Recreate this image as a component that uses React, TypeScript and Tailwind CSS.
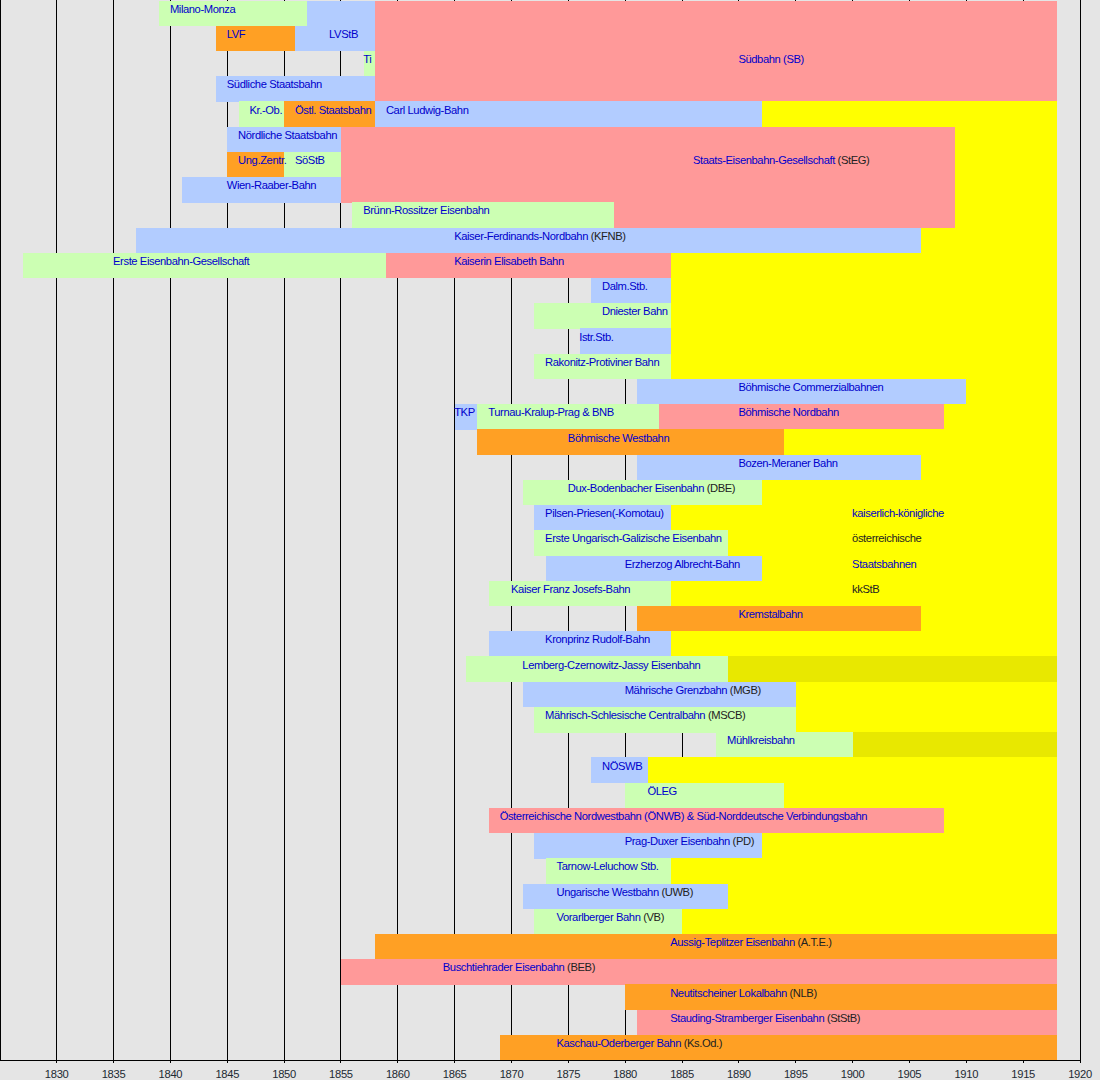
import React from "react";

type Bar = [number, number, number, string];
type Part = { t: string; link?: boolean };
type Label = { row: number; at: number; parts: Part[] };

const G = "bg-[#ccffb3]";
const B = "bg-[#b2ccff]";
const P = "bg-[#ff9999]";
const O = "bg-[#ffa024]";
const Y = "bg-[#ffff00]";
const D = "bg-[#e8e800]";

const ROW_H = 25.23;
const TOP = 0.5;
const END = 1918;

const x = (year: number) => 56.7 + (year - 1830) * 11.37;

const bars: Bar[] = [
  [0, 1839, 1852, G], [0, 1852, 1858, B], [0, 1858, END, P],
  [1, 1844, 1851, O], [1, 1851, 1858, B], [1, 1858, END, P],
  [2, 1857, 1858, G], [2, 1858, END, P],
  [3, 1844, 1858, B], [3, 1858, END, P],
  [4, 1846, 1850, G], [4, 1850, 1858, O], [4, 1858, 1892, B], [4, 1892, END, Y],
  [5, 1845, 1855, B], [5, 1855, 1909, P], [5, 1909, END, Y],
  [6, 1845, 1850, O], [6, 1850, 1855, G], [6, 1855, 1909, P], [6, 1909, END, Y],
  [7, 1841, 1855, B], [7, 1855, 1909, P], [7, 1909, END, Y],
  [8, 1856, 1879, G], [8, 1879, 1909, P], [8, 1909, END, Y],
  [9, 1837, 1906, B], [9, 1906, END, Y],
  [10, 1827, 1859, G], [10, 1859, 1884, P], [10, 1884, END, Y],
  [11, 1877, 1884, B], [11, 1884, END, Y],
  [12, 1872, 1884, G], [12, 1884, END, Y],
  [13, 1876, 1884, B], [13, 1884, END, Y],
  [14, 1872, 1884, G], [14, 1884, END, Y],
  [15, 1881, 1910, B], [15, 1910, END, Y],
  [16, 1865, 1867, B], [16, 1867, 1883, G], [16, 1883, 1908, P], [16, 1908, END, Y],
  [17, 1867, 1894, O], [17, 1894, END, Y],
  [18, 1881, 1906, B], [18, 1906, END, Y],
  [19, 1871, 1892, G], [19, 1892, END, Y],
  [20, 1872, 1884, B], [20, 1884, END, Y],
  [21, 1872, 1889, G], [21, 1889, END, Y],
  [22, 1873, 1892, B], [22, 1892, END, Y],
  [23, 1868, 1884, G], [23, 1884, END, Y],
  [24, 1881, 1906, O], [24, 1906, END, Y],
  [25, 1868, 1884, B], [25, 1884, END, Y],
  [26, 1866, 1889, G], [26, 1889, END, D],
  [27, 1871, 1895, B], [27, 1895, END, Y],
  [28, 1872, 1895, G], [28, 1895, END, Y],
  [29, 1888, 1900, G], [29, 1900, END, D],
  [30, 1877, 1882, B], [30, 1882, END, Y],
  [31, 1880, 1894, G], [31, 1894, END, Y],
  [32, 1868, 1908, P], [32, 1908, END, Y],
  [33, 1872, 1892, B], [33, 1892, END, Y],
  [34, 1873, 1884, G], [34, 1884, END, Y],
  [35, 1871, 1889, B], [35, 1889, END, Y],
  [36, 1872, 1885, G], [36, 1885, END, Y],
  [37, 1858, END, O],
  [38, 1855, END, P],
  [39, 1880, END, O],
  [40, 1881, END, P],
  [41, 1869, END, O],
];

const L = (row: number, at: number, name: string, abbr?: string, plain?: boolean): Label => ({
  row,
  at,
  parts: plain
    ? [{ t: name }]
    : abbr
    ? [{ t: name, link: true }, { t: " " + abbr }]
    : [{ t: name, link: true }],
});

const labels: Label[] = [
  L(0, 1840, "Milano-Monza"),
  L(1, 1845, "LVF"),
  L(1, 1854, "LVStB"),
  L(2, 1857, "Ti"),
  { row: 2, at: 1890, parts: [{ t: "Südbahn (SB)", link: true }] },
  L(3, 1845, "Südliche Staatsbahn"),
  L(4, 1847, "Kr.-Ob."),
  L(4, 1851, "Östl. Staatsbahn"),
  L(4, 1859, "Carl Ludwig-Bahn"),
  L(5, 1846, "Nördliche Staatsbahn"),
  L(6, 1846, "Ung.Zentr."),
  L(6, 1851, "SöStB"),
  L(6, 1886, "Staats-Eisenbahn-Gesellschaft", "(StEG)"),
  L(7, 1845, "Wien-Raaber-Bahn"),
  L(8, 1857, "Brünn-Rossitzer Eisenbahn"),
  L(9, 1865, "Kaiser-Ferdinands-Nordbahn", "(KFNB)"),
  L(10, 1835, "Erste Eisenbahn-Gesellschaft"),
  L(10, 1865, "Kaiserin Elisabeth Bahn"),
  L(11, 1878, "Dalm.Stb."),
  L(12, 1878, "Dniester Bahn"),
  L(13, 1876, "Istr.Stb."),
  L(14, 1873, "Rakonitz-Protiviner Bahn"),
  L(15, 1890, "Böhmische Commerzialbahnen"),
  L(16, 1865, "TKP"),
  L(16, 1868, "Turnau-Kralup-Prag & BNB"),
  L(16, 1890, "Böhmische Nordbahn"),
  L(17, 1875, "Böhmische Westbahn"),
  L(18, 1890, "Bozen-Meraner Bahn"),
  L(19, 1875, "Dux-Bodenbacher Eisenbahn", "(DBE)"),
  L(20, 1873, "Pilsen-Priesen(-Komotau)"),
  L(20, 1900, "kaiserlich-königliche"),
  L(21, 1873, "Erste Ungarisch-Galizische Eisenbahn"),
  L(21, 1900, "österreichische", undefined, true),
  L(22, 1880, "Erzherzog Albrecht-Bahn"),
  L(22, 1900, "Staatsbahnen"),
  L(23, 1870, "Kaiser Franz Josefs-Bahn"),
  L(23, 1900, "kkStB", undefined, true),
  L(24, 1890, "Kremstalbahn"),
  L(25, 1873, "Kronprinz Rudolf-Bahn"),
  L(26, 1871, "Lemberg-Czernowitz-Jassy Eisenbahn"),
  L(27, 1880, "Mährische Grenzbahn", "(MGB)"),
  L(28, 1873, "Mährisch-Schlesische Centralbahn", "(MSCB)"),
  L(29, 1889, "Mühlkreisbahn"),
  L(30, 1878, "NÖSWB"),
  L(31, 1882, "ÖLEG"),
  L(32, 1869, "Österreichische Nordwestbahn (ÖNWB) & Süd-Norddeutsche Verbindungsbahn"),
  L(33, 1880, "Prag-Duxer Eisenbahn", "(PD)"),
  L(34, 1874, "Tarnow-Leluchow Stb."),
  L(35, 1874, "Ungarische Westbahn", "(UWB)"),
  L(36, 1874, "Vorarlberger Bahn", "(VB)"),
  L(37, 1884, "Aussig-Teplitzer Eisenbahn", "(A.T.E.)"),
  L(38, 1864, "Buschtiehrader Eisenbahn", "(BEB)"),
  L(39, 1884, "Neutitscheiner Lokalbahn", "(NLB)"),
  L(40, 1884, "Stauding-Stramberger Eisenbahn", "(StStB)"),
  L(41, 1874, "Kaschau-Oderberger Bahn", "(Ks.Od.)"),
];

const years: number[] = [];
for (let y = 1830; y <= 1920; y += 5) years.push(y);

const AXIS_Y = 1060;

export default function App() {
  return (
    <div className="relative w-[1100px] h-[1080px] overflow-hidden bg-[#e5e5e5] font-['Liberation_Sans',Arial,sans-serif]">
      {/* left frame */}
      <div className="absolute left-0 top-0 w-px h-[1060px] bg-black" />

      {/* grid lines */}
      {years.map((y) => (
        <div
          key={y}
          className="absolute top-0 w-px bg-black"
          style={{ left: Math.floor(x(y)), height: AXIS_Y + 3 }}
        />
      ))}

      {/* bars */}
      {bars.map(([row, from, to, color], i) => {
        const top = TOP + row * ROW_H;
        return (
          <div
            key={i}
            className={`absolute ${color}`}
            style={{ left: x(from), width: x(to) - x(from), top, height: ROW_H + 0.4 }}
          />
        );
      })}

      {/* axis */}
      <div className="absolute left-0 top-[1060px] w-[1081px] h-px bg-black" />

      {/* labels */}
      {labels.map((l, i) => {
        const center = TOP + l.row * ROW_H + ROW_H / 2 - 4;
        return (
          <div
            key={i}
            className="absolute whitespace-nowrap text-[11.2px] leading-[13px] tracking-[-0.4px]"
            style={{ left: x(l.at) - 0.5, top: center - 6.5 }}
          >
            {l.parts.map((p, j) => (
              <span key={j} className={p.link ? "text-[#0000cc]" : "text-[#222222]"}>
                {p.t}
              </span>
            ))}
          </div>
        );
      })}

      {/* year labels */}
      {years.map((y) => (
        <div
          key={y}
          className="absolute top-[1069px] w-10 -ml-5 text-center text-[11.2px] leading-[11px] tracking-[-0.3px] text-[#222a33]"
          style={{ left: x(y) }}
        >
          {y}
        </div>
      ))}
    </div>
  );
}
